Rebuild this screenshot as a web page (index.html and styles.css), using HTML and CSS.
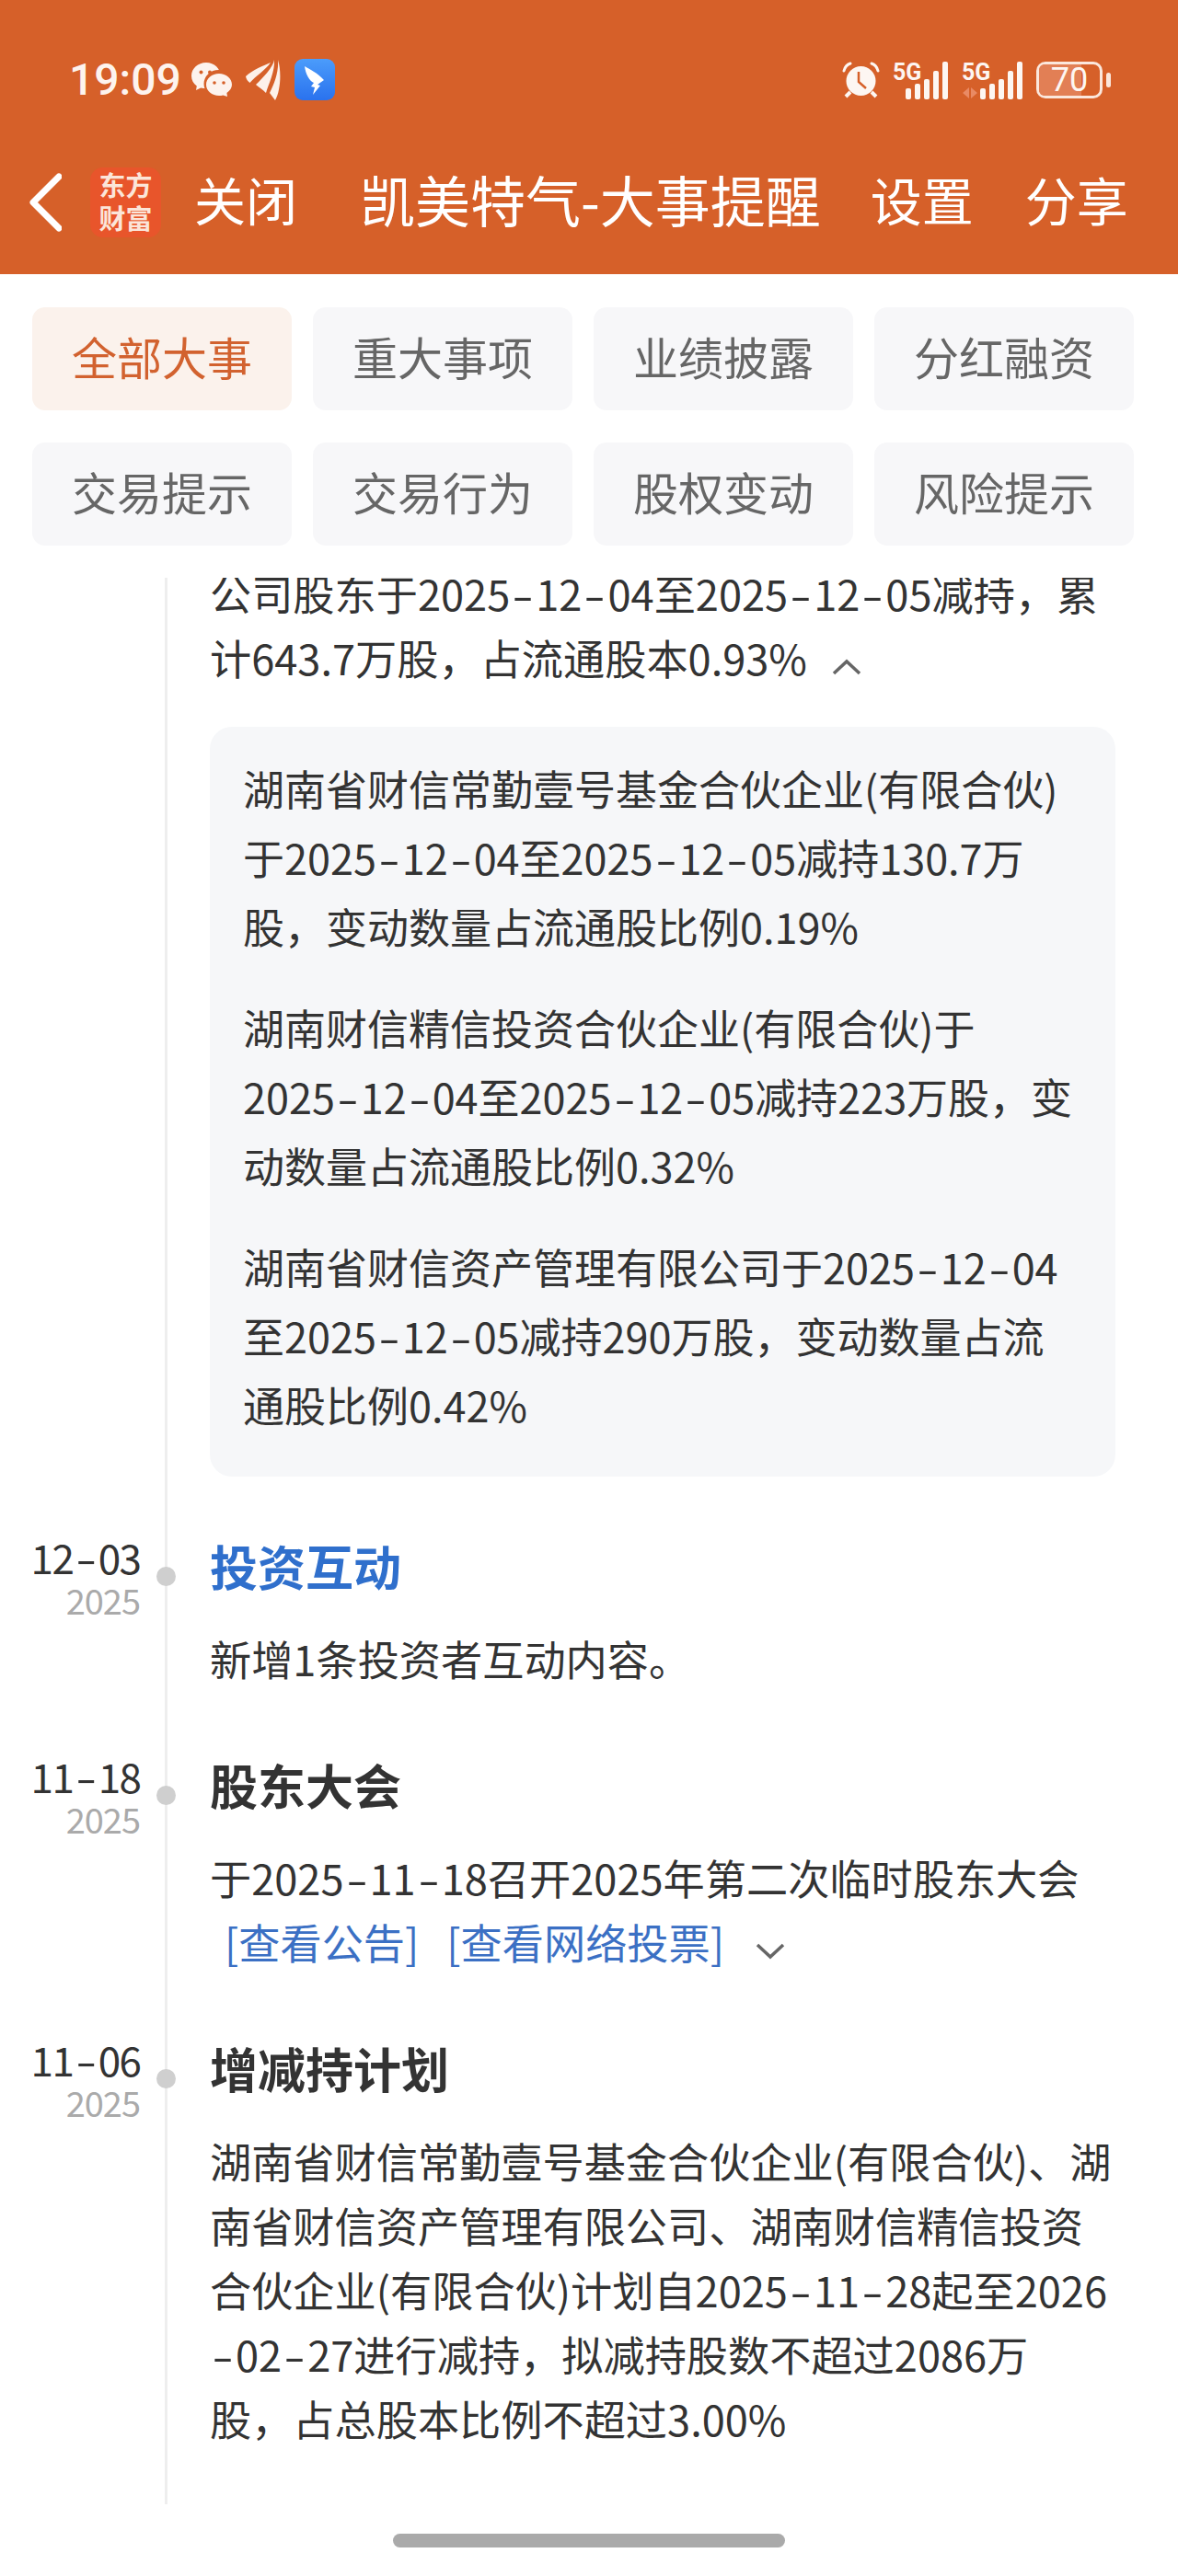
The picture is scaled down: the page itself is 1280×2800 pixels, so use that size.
FILE: index.html
```html
<!DOCTYPE html>
<html>
  <head>
    <meta charset="utf-8">
    <title>凯美特气-大事提醒</title>
    <link rel="stylesheet" href="styles.css">
  </head>
  <body>
    <div id="page">
      <div class="header">
        <div class="status">
          <div class="status-left">
            <span class="time">19:09</span>
            <svg class="ic-wechat" width="44" height="37" viewBox="0 0 44 37">
              <path fill="#fdf3ee" d="M16 0C7 0 0 6.500 0 14.500c0 4.500 2.200 8.500 5.800 11L5 30l5.200-2.600c1.800.5 3.800.8 5.800.8 9 0 15.500-6.500 15.500-14S25 0 16 0z"/>
              <ellipse fill="#d66029" cx="29.500" cy="23" rx="16" ry="15"/>
              <path fill="#fdf3ee" d="M30 12c-7.700 0-14 5.200-14 12s6.300 12 14 12c1.500 0 3-.2 4.400-.6L39 37l-.6-4.100c3.400-2.200 5.600-5.300 5.600-8.900 0-6.800-6.300-12-14-12z"/>
              <circle fill="#d66029" cx="10.500" cy="10.500" r="2"/>
              <circle fill="#d66029" cx="20" cy="10.500" r="2"/>
              <circle fill="#d66029" cx="25" cy="22" r="1.800"/>
              <circle fill="#d66029" cx="35" cy="22" r="1.800"/>
            </svg>
            <svg class="ic-feather" width="38" height="45" viewBox="0 0 38 45">
              <path fill="#fdf1ea" d="M27 4C20 7 7 12 0 19c.5 3 2 5 4.500 7C11 18 21 13 27 4z"/>
              <path fill="#fdf1ea" d="M31 1c-1 8-13 20-20 27 3 2.500 7 5 11 9 3-10 10-24 9-36z"/>
              <path fill="#fdf1ea" d="M35 1c1 14-4 26-9 36 2 3 4 5 6 8 6-10 7-32 3-44z"/>
            </svg>
            <svg class="ic-ding" width="44" height="45" viewBox="0 0 44 45">
              <defs>
                <linearGradient id="dingbg" x1="0" y1="0" x2="0" y2="1">
                  <stop offset="0" stop-color="#4b9cfb"/>
                  <stop offset="1" stop-color="#2a72ee"/>
                </linearGradient>
              </defs>
              <rect width="44" height="45" rx="9" fill="url(#dingbg)"/>
              <path fill="#fff" d="M11 8c5 3 14 7 21 15l-7 5 3 1-8 10 2-8-4-1 3-4c-5-2-9-10-10-18z"/>
            </svg>
          </div>
          <div class="status-right">
            <svg width="41" height="40" viewBox="0 0 41 40">
              <circle fill="#fdf6f2" cx="20.500" cy="21" r="16"/>
              <path fill="none" stroke="#fdf6f2" stroke-width="3" stroke-linecap="round" d="M2 10c1-4 4-7 7-8M39 10c-1-4-4-7-7-8"/>
              <path fill="none" stroke="#fdf6f2" stroke-width="4" d="M9 33l-5 5M32 33l5 5"/>
              <path fill="none" stroke="#d66029" stroke-width="2.500" d="M18 11v11l8 7"/>
            </svg>
            <svg class="sig" width="61" height="42" viewBox="0 0 61 42">
              <text class="sig-text" x="0" y="21">5G</text>
              <rect x="14" y="30" width="6" height="12" rx="2"/>
              <rect x="24" y="25" width="6" height="17" rx="2"/>
              <rect x="34" y="20" width="6" height="22" rx="2"/>
              <rect x="44" y="11" width="6" height="31" rx="2"/>
              <rect x="54" y="1" width="6" height="41" rx="2"/>
            </svg>
            <svg class="sig" width="67" height="42" viewBox="0 0 67 42">
              <text class="sig-text" x="0" y="21">5G</text>
              <path class="sig-arrows" d="M8 29v12L1 35zM10 29l7 6-7 6z"/>
              <rect x="20" y="30" width="6" height="12" rx="2"/>
              <rect x="30" y="25" width="6" height="17" rx="2"/>
              <rect x="40" y="20" width="6" height="22" rx="2"/>
              <rect x="50" y="11" width="6" height="31" rx="2"/>
              <rect x="60" y="1" width="6" height="41" rx="2"/>
            </svg>
            <div class="battery">
              <div class="battery-body">
                <div class="battery-fill"></div>
                <span class="battery-num">70</span>
              </div>
              <div class="battery-tip"></div>
            </div>
          </div>
        </div>
        <div class="nav">
          <svg class="back" width="35" height="64" viewBox="0 0 35 64">
            <path fill="none" stroke="#fff" stroke-width="7" stroke-linecap="round" stroke-linejoin="round" d="M32 4L4 32l28 28"/>
          </svg>
          <div class="logo">东方<br>财富</div>
          <span class="nav-btn close">关闭</span>
          <span class="nav-title">凯美特气-大事提醒</span>
          <span class="nav-btn setting">设置</span>
          <span class="nav-btn share">分享</span>
        </div>
      </div>

      <div class="tabs">
        <div class="tab active">全部大事</div>
        <div class="tab">重大事项</div>
        <div class="tab">业绩披露</div>
        <div class="tab">分红融资</div>
        <div class="tab">交易提示</div>
        <div class="tab">交易行为</div>
        <div class="tab">股权变动</div>
        <div class="tab">风险提示</div>
      </div>

      <div class="timeline">
        <div class="item first">
          <div class="date"></div>
          <div class="main">
            <div class="text">公司股东于2025<span class="hy">-</span>12<span class="hy">-</span>04至2025<span class="hy">-</span>12<span class="hy">-</span>05减持，累<br>计643.7万股，占流通股本0.93%<svg class="arrow up" width="32" height="18" viewBox="0 0 32 18"><path d="M2 16L16 3l14 13"/></svg></div>
            <div class="detail">
              <p>湖南省财信常勤壹号基金合伙企业(有限合伙)<br>于2025<span class="hy">-</span>12<span class="hy">-</span>04至2025<span class="hy">-</span>12<span class="hy">-</span>05减持130.7万<br>股，变动数量占流通股比例0.19%</p>
              <p>湖南财信精信投资合伙企业(有限合伙)于<br>2025<span class="hy">-</span>12<span class="hy">-</span>04至2025<span class="hy">-</span>12<span class="hy">-</span>05减持223万股，变<br>动数量占流通股比例0.32%</p>
              <p>湖南省财信资产管理有限公司于2025<span class="hy">-</span>12<span class="hy">-</span>04<br>至2025<span class="hy">-</span>12<span class="hy">-</span>05减持290万股，变动数量占流<br>通股比例0.42%</p>
            </div>
          </div>
        </div>

        <div class="item">
          <div class="date">
            <div class="day">12<span class="hy">-</span>03</div>
            <div class="year">2025</div>
          </div>
          <i class="dot"></i>
          <div class="main">
            <div class="title blue">投资互动</div>
            <div class="text">新增1条投资者互动内容。</div>
          </div>
        </div>

        <div class="item">
          <div class="date">
            <div class="day">11<span class="hy">-</span>18</div>
            <div class="year">2025</div>
          </div>
          <i class="dot"></i>
          <div class="main">
            <div class="title">股东大会</div>
            <div class="text">于2025<span class="hy">-</span>11<span class="hy">-</span>18召开2025年第二次临时股东大会<br><a class="link">[查看公告]</a><a class="link">[查看网络投票]</a><svg class="arrow down" width="32" height="18" viewBox="0 0 32 18"><path d="M2 2l14 13L30 2"/></svg></div>
          </div>
        </div>

        <div class="item">
          <div class="date">
            <div class="day">11<span class="hy">-</span>06</div>
            <div class="year">2025</div>
          </div>
          <i class="dot"></i>
          <div class="main">
            <div class="title">增减持计划</div>
            <div class="text">湖南省财信常勤壹号基金合伙企业(有限合伙)、湖<br>南省财信资产管理有限公司、湖南财信精信投资<br>合伙企业(有限合伙)计划自2025<span class="hy">-</span>11<span class="hy">-</span>28起至2026<br><span class="hy">-</span>02<span class="hy">-</span>27进行减持，拟减持股数不超过2086万<br>股，占总股本比例不超过3.00%</div>
          </div>
        </div>
      </div>

      <div class="home-bar"></div>
    </div>
  </body>
</html>
```

FILE: styles.css
```css
*{
  box-sizing: border-box;
}
body{
  margin: 0;
  background: #fff;
  font-family: "Noto Sans CJK SC", sans-serif;
  color: #333;
}
#page{
  width: 1280px;
  height: 2800px;
  overflow: hidden;
}

/* top orange part */
.header{
  height: 298px;
  padding-top: 64px;
  background: #d66029;
  color: #fff;
}
.status{
  display: flex;
  justify-content: space-between;
  height: 45px;
  padding: 0 73px 0 75px;
}
.status-left{
  display: flex;
  align-items: center;
}
.time{
  width: 133px;
  font-family: Roboto, sans-serif;
  font-size: 48px;
  font-weight: 500;
  color: #fdf3ee;
}
.ic-feather{
  margin-left: 15px;
}
.ic-ding{
  margin-left: 15px;
}
.status-right{
  display: flex;
  align-items: center;
  gap: 14px;
}
.sig{
  overflow: visible;
}
.sig rect{
  fill: #fdf6f2;
}
.sig-text{
  font-family: Roboto, sans-serif;
  font-size: 25px;
  font-weight: 700;
  fill: #fdf6f2;
}
.sig-arrows{
  fill: #e98a64;
}
.battery{
  display: flex;
  align-items: center;
  gap: 4px;
}
.battery-body{
  position: relative;
  width: 72px;
  height: 40px;
  border: 3px solid #fbe7dc;
  border-radius: 10px;
}
.battery-fill{
  width: 70%;
  height: 100%;
  border-radius: 6px 0 0 6px;
  background: #e27f55;
}
.battery-num{
  position: absolute;
  top: 0;
  left: 0;
  width: 100%;
  height: 34px;
  font-family: Roboto, sans-serif;
  font-size: 36px;
  line-height: 34px;
  text-align: center;
  color: #fdf6f2;
}
.battery-tip{
  width: 5px;
  height: 16px;
  border-radius: 3px;
  background: #fbe7dc;
}

.nav{
  display: flex;
  align-items: center;
  height: 76px;
  margin-top: 73px;
  padding-left: 32px;
}
.logo{
  width: 77px;
  height: 76px;
  margin-left: 31px;
  border-radius: 14px;
  background: #e8552b;
  font-size: 29px;
  font-weight: 700;
  line-height: 36px;
  text-align: center;
  color: #fbe5d9;
}
.nav-btn{
  font-size: 56px;
  line-height: 68px;
  padding-bottom: 8px;
}
.nav-title{
  font-size: 60px;
  line-height: 68px;
  padding-bottom: 8px;
  margin-left: 68px;
}
.close{
  margin-left: 36px;
}
.setting{
  margin-left: 54px;
}
.share{
  margin-left: 56px;
}

/* tabs */
.tabs{
  display: grid;
  grid-template-columns: repeat(4, 282px);
  gap: 35px 23px;
  padding: 36px 0 0 35px;
}
.tab{
  height: 112px;
  border-radius: 14px;
  background: #f7f7f9;
  font-size: 49px;
  line-height: 106px;
  text-align: center;
  color: #666;
}
.tab.active{
  background: #fbf2ec;
  color: #d2622f;
}

/* timeline */
.timeline{
  position: relative;
  height: 2094px;
  margin-top: 35px;
  padding-right: 68px;
  overflow: hidden;
}
.timeline::before{
  content: "";
  position: absolute;
  top: 0;
  bottom: 0;
  left: 179px;
  width: 3px;
  background: #eee;
}
.item{
  position: relative;
  display: grid;
  grid-template-columns: 151px 1fr;
  column-gap: 77px;
  padding-bottom: 70.500px;
}
.item.first{
  margin-top: -18.500px;
  padding-bottom: 65px;
}
.date{
  text-align: right;
}
.day{
  font-size: 44px;
  line-height: 44px;
  letter-spacing: -1.500px;
  margin-right: -1.500px;
}
.year{
  font-size: 38px;
  line-height: 50px;
  letter-spacing: -1px;
  margin-right: -1px;
  color: #aaa;
}
.dot{
  position: absolute;
  top: 33px;
  left: 170px;
  width: 21px;
  height: 21px;
  border-radius: 50%;
  background: #cfcfcf;
}
.title{
  margin-bottom: 33.500px;
  font-size: 52px;
  font-weight: 700;
  line-height: 64px;
}
.title.blue{
  color: #2f6fcc;
}
.text{
  font-size: 45.200px;
  line-height: 70px;
  white-space: nowrap;
}
.hy{
  display: inline-block;
  width: .62em;
  text-align: center;
  transform: scaleX(1.5);
}
.link{
  margin-left: 16px;
  margin-right: 14px;
  color: #3b70c4;
}
.arrow{
  fill: none;
  stroke: #666;
  stroke-width: 3.500px;
}
.arrow.up{
  margin-left: 27px;
}
.arrow.down{
  margin-left: 20px;
}
.detail{
  margin-top: 40.500px;
  padding: 29px 20px 41px 36px;
  border-radius: 24px;
  background: #f6f7f9;
  font-size: 45px;
  line-height: 75px;
  white-space: nowrap;
}
.detail p{
  margin: 0 0 35px;
}
.detail p:last-child{
  margin-bottom: 0;
}

.home-bar{
  width: 426px;
  height: 15px;
  margin: 32px auto 0;
  border-radius: 8px;
  background: #aaa;
}
```
